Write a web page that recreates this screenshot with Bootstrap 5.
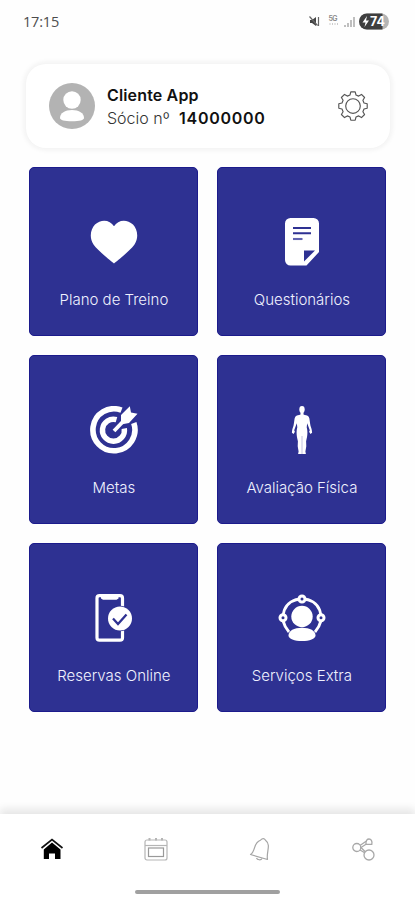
<!DOCTYPE html>
<html lang="pt">
<head>
<meta charset="utf-8">
<meta name="viewport" content="width=device-width, initial-scale=1">
<title>Cliente App</title>
<link href="https://cdn.jsdelivr.net/npm/bootstrap@5.3.0/dist/css/bootstrap.min.css" rel="stylesheet">
<style>
body{font-family:Inter,"Liberation Sans",sans-serif;background:#fefefe;color:#111}
svg{display:block;flex:none}
.screen{height:900px;overflow:hidden}
.status{height:44px;padding:0 25px 0 23px}
.clock{font:500 14.5px/20px "Open Sans",sans-serif;color:#4c4c4c;letter-spacing:-.2px}
.profile{margin:20px 25px 0 26px;height:84px;border-radius:20px;padding:0 22px 0 23px;background:#fff;box-shadow:0 0 5px 2px #f1f1f1}
.who{font-size:16px;line-height:23px;margin-left:12px;padding-top:1px}
.who-name{font-weight:600;letter-spacing:.15px}
.who-id{font-weight:300;color:#333}
.who-id b{font-weight:600;color:#111;margin-left:5px;letter-spacing:.7px}
.tiles{display:grid;grid-template-columns:169px 169px;gap:19px;margin:19px 0 0 29.4px}
.tile{height:169px;padding-top:50px;border-radius:5px;background:#2e3192;border:1px solid #1c1b8c;color:#f0f1ff}
.tile-name{font-size:15px;line-height:20px;font-weight:300;margin-top:24px;white-space:nowrap}
.tabs{height:86px;background:#fff;box-shadow:0 -5px 8px #e6e6e6}
.tab-row{height:70px;padding:0 39px 0 40px}
.home-bar{width:145px;height:4px;border-radius:2px;background:#a0a0a0;margin-top:6px}
</style>
</head>
<body>
<main class="screen d-flex flex-column">
<header class="status d-flex align-items-center justify-content-between">
<span class="clock">17:15</span>
<svg width="82" height="20" viewBox="308 12 82 20">
<path d="M310 20h2l4-3v9l-4-3h-2z" fill="#444"/><path d="M309.500 16.500l8 9M318.500 17v9" stroke="#666" stroke-width="1.200" fill="none"/>
<text x="328.500" y="20.500" font-size="7" font-weight="600" fill="#888" textLength="9">5G</text>
<path d="M330 25v-2M332.500 25v-2M335 25v-2M337.500 25v-2" stroke="#ccc"/>
<path d="M345 27v-2M348 27v-4M351 27v-7M354 27v-10" stroke="#aaa" stroke-width="1.500"/>
<rect x="359" y="13.500" width="30" height="16" rx="8" fill="#b5b5b5"/><path d="M367 13.500h15.500v16H367a8 8 0 010-16z" fill="#3f3f3f"/>
<path d="M367 16l-4.500 6.500h3l-1 4.500 4.500-6.500h-3z" fill="#fff"/>
<text x="370" y="26" font-size="12.500" font-weight="700" fill="#fff" textLength="15">74</text>
</svg>
</header>
<section class="profile d-flex align-items-center">
<svg width="46" height="46" viewBox="0 0 46 46"><circle cx="23" cy="23" r="23" fill="#b3b3b3"/><circle cx="23" cy="17" r="8.700" fill="#fff"/><path d="M11 35c0-5 5-8 12-8s12 3 12 8c0 2-4.500 3.300-12 3.300S11 37 11 35z" fill="#fff"/></svg>
<div class="who flex-grow-1"><div class="who-name">Cliente App</div><div class="who-id">Sócio nº <b>14000000</b></div></div>
<svg width="30" height="30" viewBox="-15 -15 30 30" fill="none" stroke="#555" stroke-width="1.150" stroke-linejoin="round">
<path d="M-3 -11L-2.200 -14.200H2.200L3 -11L5.700 -9.900L8.500 -11.600L11.600 -8.500L9.900 -5.700L11 -3L14.200 -2.200V2.200L11 3L9.900 5.700L11.600 8.500L8.500 11.600L5.700 9.900L3 11L2.200 14.200H-2.200L-3 11L-5.700 9.900L-8.500 11.600L-11.600 8.500L-9.900 5.700L-11 3L-14.200 2.200V-2.200L-11 -3L-9.900 -5.700L-11.600 -8.500L-8.500 -11.600L-5.700 -9.900Z"/><circle r="7.300"/></svg>
</section>
<section class="tiles">
<div class="tile d-flex flex-column align-items-center">
<svg width="48" height="48" viewBox="0 0 48 48"><path d="M24 45.500C21 43 8 33 3.500 26.500C-1 20 .5 11 5 6.500C11 .8 20 1.500 24 8.300C28 1.500 37 .8 43 6.500C47.500 11 49 20 44.500 26.500C40 33 27 43 24 45.500Z" fill="#fff"/></svg>
<div class="tile-name">Plano de Treino</div></div>
<div class="tile d-flex flex-column align-items-center">
<svg width="48" height="48" viewBox="0 0 48 48"><path d="M12.500 0h23a5.500 5.500 0 015.500 5.500V34L28.500 47.500h-16A5.500 5.500 0 017 42V5.500A5.500 5.500 0 0112.500 0z" fill="#fff"/><path d="M26 32.500h11L26 43.500z" fill="#2e3192"/><path d="M15 10h18M15 15.300h18" stroke="#2e3192" stroke-width="2.100"/><path d="M15 21h9.500" stroke="#6264b0" stroke-width="2.100"/></svg>
<div class="tile-name">Questionários</div></div>
<div class="tile d-flex flex-column align-items-center">
<svg width="48" height="48" viewBox="0 0 48 48" fill="none" stroke="#fff" stroke-width="5.600"><path d="M31.500 4.200A21 21 0 1 0 43.800 17"/><path d="M26.500 13.700A11 11 0 1 0 34.300 22.500" stroke-width="5.400"/><path d="M24 25L34 14.500" stroke-width="3.800"/><path d="M31 9L39.800.2L41 6.500L47.500 7.800L39 17L31 18.500Z" fill="#fff" stroke="none"/></svg>
<div class="tile-name">Metas</div></div>
<div class="tile d-flex flex-column align-items-center">
<svg width="48" height="48" viewBox="0 0 48 48" fill="#fff"><ellipse cx="24" cy="3.500" rx="2.700" ry="3.400"/><path d="M22.500 6h3v2.500c1.500 1 4 .6 5.200 2.200c1.200 2 1 6 1.800 9c.8 2.500 1.500 4 1.600 7l-1.700 1.200l-1.300-2.200l.7-1.500l-2.600-7l-.5 4c1.400 5 .5 9.500-.6 14l.2 5l-.9 5.200l.6 3.200h-8l.6-3.200l-.9-5.200l.2-5c-1.100-4.500-2-9-.6-14l-.5-4l-2.600 7l.7 1.500l-1.300 2.200l-1.700-1.200c.1-3 .8-4.500 1.600-7c.8-3 .6-7 1.800-9c1.200-1.600 3.700-1.200 5.200-2.200z"/><path d="M24 30v18" stroke="#9a9bcb" stroke-width=".6"/></svg>
<div class="tile-name">Avaliação Física</div></div>
<div class="tile d-flex flex-column align-items-center">
<svg width="48" height="48" viewBox="1 0 48 48"><rect x="8" y="1.700" width="25.500" height="44.500" rx="2.500" fill="none" stroke="#fff" stroke-width="3.200"/><path d="M12 3h17.500v1.500l-2 1.300H14l-2-1.300z" fill="#fff"/><circle cx="31" cy="24.500" r="12.800" fill="#2e3192"/><circle cx="31" cy="24.500" r="12" fill="#fff"/><path d="M24 24.500l5 5.500l8.500-9.500" fill="none" stroke="#2e3192" stroke-width="2.300"/></svg>
<div class="tile-name">Reservas Online</div></div>
<div class="tile d-flex flex-column align-items-center">
<svg width="48" height="48" viewBox="0 0 48 48"><path d="M11 38C-1 24 6 5 24 5S49 24 37 38" fill="none" stroke="#fff" stroke-width="2.800"/><g fill="#2e3192" stroke="#fff" stroke-width="3"><circle cx="24" cy="5" r="3"/><circle cx="5" cy="23.700" r="3"/><circle cx="43" cy="23.700" r="3"/></g><circle cx="24" cy="22.500" r="10.700" fill="#fff"/><path d="M10.500 41.500c0-5 5.500-7.800 13.500-7.800s13.500 2.800 13.500 7.800c0 3.500-6 5.500-13.500 5.500s-13.500-2-13.500-5.500z" fill="#fff"/></svg>
<div class="tile-name">Serviços Extra</div></div>
</section>
<footer class="tabs mt-auto d-flex flex-column align-items-center">
<nav class="tab-row w-100 d-flex align-items-center justify-content-between">
<svg width="24" height="24" viewBox="0 0 24 24"><path d="M1.500 11L12 2.500L22.500 11" fill="none" stroke="#111" stroke-width="1.700"/><path d="M12 5.500L20.500 12.500V22H15v-5.500H9V22H3.800v-9.500z" fill="#000"/></svg>
<svg width="24" height="24" viewBox="0 0 24 24" fill="none" stroke="#b5b5b5" stroke-width="1.200"><rect x="1" y="3" width="22" height="20" rx="2"/><path d="M1 8.500h22"/><rect x="4.500" y="11" width="15" height="8.500" stroke="#999"/><path d="M5.500 1v2.500M12 1v2.500M18 1v2.500" stroke-width="2"/></svg>
<svg width="24" height="24" viewBox="0 0 24 24" fill="none" stroke="#a5a5a5" stroke-width="1.200" stroke-linejoin="round"><path d="M2.500 17.500C8 14 5 5.500 12.500 3.200Q15.500 0 17.500 3.300C23.500 8 18 15 19.500 22.500L2.500 17.500Z"/><path d="M8.500 21c.8 2 4.500 2.500 5.500.5"/></svg>
<svg width="24" height="24" viewBox="0 0 24 24" fill="none" stroke="#a8a8a8" stroke-width="1.300"><circle cx="4.800" cy="10.500" r="4"/><circle cx="17" cy="18" r="5"/><path d="M14 7.300C13.500 3.500 15.500 2 17 2C19 2 20.500 4 19.800 7.300Z"/><path d="M8.300 8.300L14.500 4M14 7.300L9 10.500L13 14.500M8 13l4.300 2.500"/></svg>
</nav>
<div class="home-bar"></div>
</footer>
</main>
<script src="https://cdn.jsdelivr.net/npm/bootstrap@5.3.0/dist/js/bootstrap.bundle.min.js"></script>
</body>
</html>
